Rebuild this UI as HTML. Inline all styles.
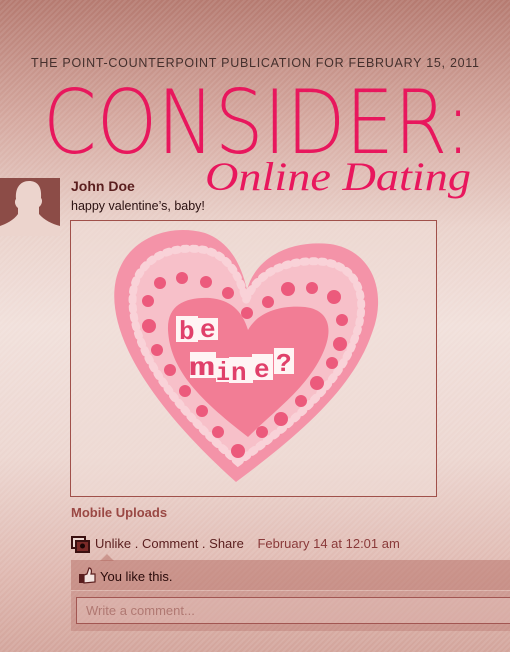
<!DOCTYPE html>
<html><head><meta charset="utf-8"><style>
*{margin:0;padding:0;box-sizing:border-box}
html,body{width:510px;height:652px;overflow:hidden}
body{position:relative;font-family:"Liberation Sans",sans-serif;
background:linear-gradient(180deg,#b57a70 0%,#d4a79e 18%,#ead2cb 35%,#f1e0db 50%,#ecd6d0 70%,#dfb8b0 88%,#d3a59c 100%);}
.stripes{position:absolute;inset:0;background:repeating-linear-gradient(135deg,rgba(255,255,255,0.09) 0 2px,rgba(0,0,0,0) 2px 4px)}
.abs{position:absolute}
.name{left:71px;top:178px;font-size:14px;font-weight:bold;color:#5a1e1e}
.msg{left:71px;top:199px;font-size:12.5px;color:#2a1010}
.mu{left:71px;top:505px;font-size:13px;font-weight:bold;color:#9a4844}
.act{left:95px;top:536px;font-size:13px;color:#5a1e1e;white-space:nowrap}
.act span{color:#8a3a3a;margin-left:10px}
.like{left:71px;top:560px;width:439px;height:30px;background:rgba(175,100,92,0.45)}
.cmt{left:71px;top:591px;width:439px;height:40px;background:rgba(175,100,92,0.3)}
.inp{left:76px;top:597px;width:440px;height:27px;border:1px solid #a25652;background:rgba(240,215,210,0.35);font-size:13px;color:#b07872;padding:5px 9px}
</style></head><body>
<div class="stripes"></div>
<svg class="abs" style="left:0;top:0" width="510" height="240">
<text x="31" y="67" font-family="Liberation Sans" font-size="12.5" fill="#45302d" textLength="448" lengthAdjust="spacing">THE POINT-COUNTERPOINT PUBLICATION FOR FEBRUARY 15, 2011</text>
<text x="43" y="153" font-family="DejaVu Sans ExtraLight, DejaVu Sans, Liberation Sans" font-weight="200" font-size="88" fill="#e8175d" textLength="428" lengthAdjust="spacingAndGlyphs">CONSIDER:</text>
<text x="205" y="190" font-family="Liberation Serif" font-style="italic" font-size="40" fill="#e8175d" textLength="266" lengthAdjust="spacingAndGlyphs">Online Dating</text>
</svg>
<svg class="abs" style="left:0;top:178px" width="60" height="58">
<rect width="60" height="58" fill="#8c4c47"/>
<path d="M0,58 L0,48 C6,46 14,42 18,36 L18,30 C15,28 14,23 16,21 C15,9 21,3 29,3 C37,3 42,8 41,20 C43,22 42,27 39,29 L39,36 C44,42 52,46 60,48 L60,58Z" fill="#ecd4cd"/>
</svg>
<div class="abs name">John Doe</div>
<div class="abs msg">happy valentine’s, baby!</div>
<div class="abs" style="left:70px;top:220px;width:367px;height:277px;border:1px solid #a0504a;background:rgba(240,222,216,0.5)"></div>
<svg class="abs" style="left:0;top:0" width="510" height="500">
<path d="M236,482 C150,405 108,335 115,285 C121,242 165,222 205,233 C225,240 240,258 247,290 C256,256 292,240 330,244 C372,250 388,292 372,333 C352,392 292,440 236,482Z" fill="#f493a8"/>
<path d="M238,462 C165,400 128,340 133,292 C138,258 172,244 205,250 C225,255 238,270 246,300 C258,270 292,258 325,262 C360,268 368,300 356,335 C340,385 290,425 238,462Z" fill="#f7c0c9" stroke="#f9d2d8" stroke-width="8" stroke-dasharray="3 6" stroke-linecap="round"/>
<path d="M248,437 C200,400 170,370 168,330 C167,305 185,297 210,298 C230,300 242,310 248,330 C258,312 280,305 305,307 C330,310 334,330 322,355 C305,390 275,410 248,437Z" fill="#f27d95"/>
<g fill="#ec5a7c">
<circle cx="160" cy="283" r="6"/><circle cx="182" cy="278" r="6"/><circle cx="206" cy="282" r="6"/><circle cx="228" cy="293" r="6"/><circle cx="247" cy="313" r="6"/>
<circle cx="148" cy="301" r="6"/><circle cx="149" cy="326" r="7"/><circle cx="157" cy="350" r="6"/><circle cx="170" cy="370" r="6"/><circle cx="185" cy="391" r="6"/><circle cx="202" cy="411" r="6"/><circle cx="218" cy="432" r="6"/><circle cx="238" cy="451" r="7"/>
<circle cx="262" cy="432" r="6"/><circle cx="281" cy="419" r="7"/><circle cx="301" cy="401" r="6"/><circle cx="317" cy="383" r="7"/><circle cx="332" cy="363" r="6"/><circle cx="340" cy="344" r="7"/><circle cx="342" cy="320" r="6"/><circle cx="334" cy="297" r="7"/><circle cx="312" cy="288" r="6"/><circle cx="288" cy="289" r="7"/><circle cx="268" cy="302" r="6"/>
</g>
<g fill="#fff4f4"><rect x="176" y="316" width="22" height="26"/><rect x="198" y="318" width="20" height="22"/>
<rect x="190" y="352" width="26" height="26"/><rect x="216" y="358" width="14" height="24"/><rect x="229" y="357" width="24" height="26"/><rect x="252" y="354" width="21" height="26"/><rect x="274" y="348" width="20" height="26"/></g>
<g font-family="Liberation Mono" font-weight="bold" fill="#e0406a" font-size="26">
<text x="179" y="339">b</text><text x="200" y="337">e</text>
<text x="189" y="375" textLength="26" lengthAdjust="spacingAndGlyphs">m</text><text x="216" y="380" textLength="14" lengthAdjust="spacingAndGlyphs">i</text><text x="231" y="380">n</text><text x="254" y="377">e</text><text x="276" y="371">?</text></g>
</svg>
<div class="abs mu">Mobile Uploads</div>
<svg class="abs" style="left:71px;top:536px" width="20" height="17"><rect x="1" y="1" width="13" height="11" fill="#ecd6d0" stroke="#3a1010" stroke-width="2"/><rect x="5" y="5" width="13" height="11" fill="#7a2a28" stroke="#3a1010" stroke-width="2"/><circle cx="11.5" cy="10" r="2.5" fill="#1a0505"/></svg>
<div class="abs act">Unlike . Comment . Share <span>February 14 at 12:01 am</span></div>
<svg class="abs" style="left:100px;top:554px" width="14" height="7"><path d="M0,7 L7,0 L14,7Z" fill="rgba(175,100,92,0.45)"/></svg>
<div class="abs like"></div>
<svg class="abs" style="left:78px;top:567px" width="18" height="17"><rect x="1" y="7" width="5" height="9" fill="#5a1e1e"/><path d="M6,8 L9,7 L11,1 C13,1 14,3 13,7 L17,7 L17,15 L6,16Z" fill="#f4e4e0" stroke="#5a1e1e" stroke-width="1.2"/></svg>
<div class="abs" style="left:100px;top:569px;font-size:13px;color:#2a0a0a">You like this.</div>
<div class="abs cmt"></div>
<div class="abs inp">Write a comment...</div>
</body></html>
